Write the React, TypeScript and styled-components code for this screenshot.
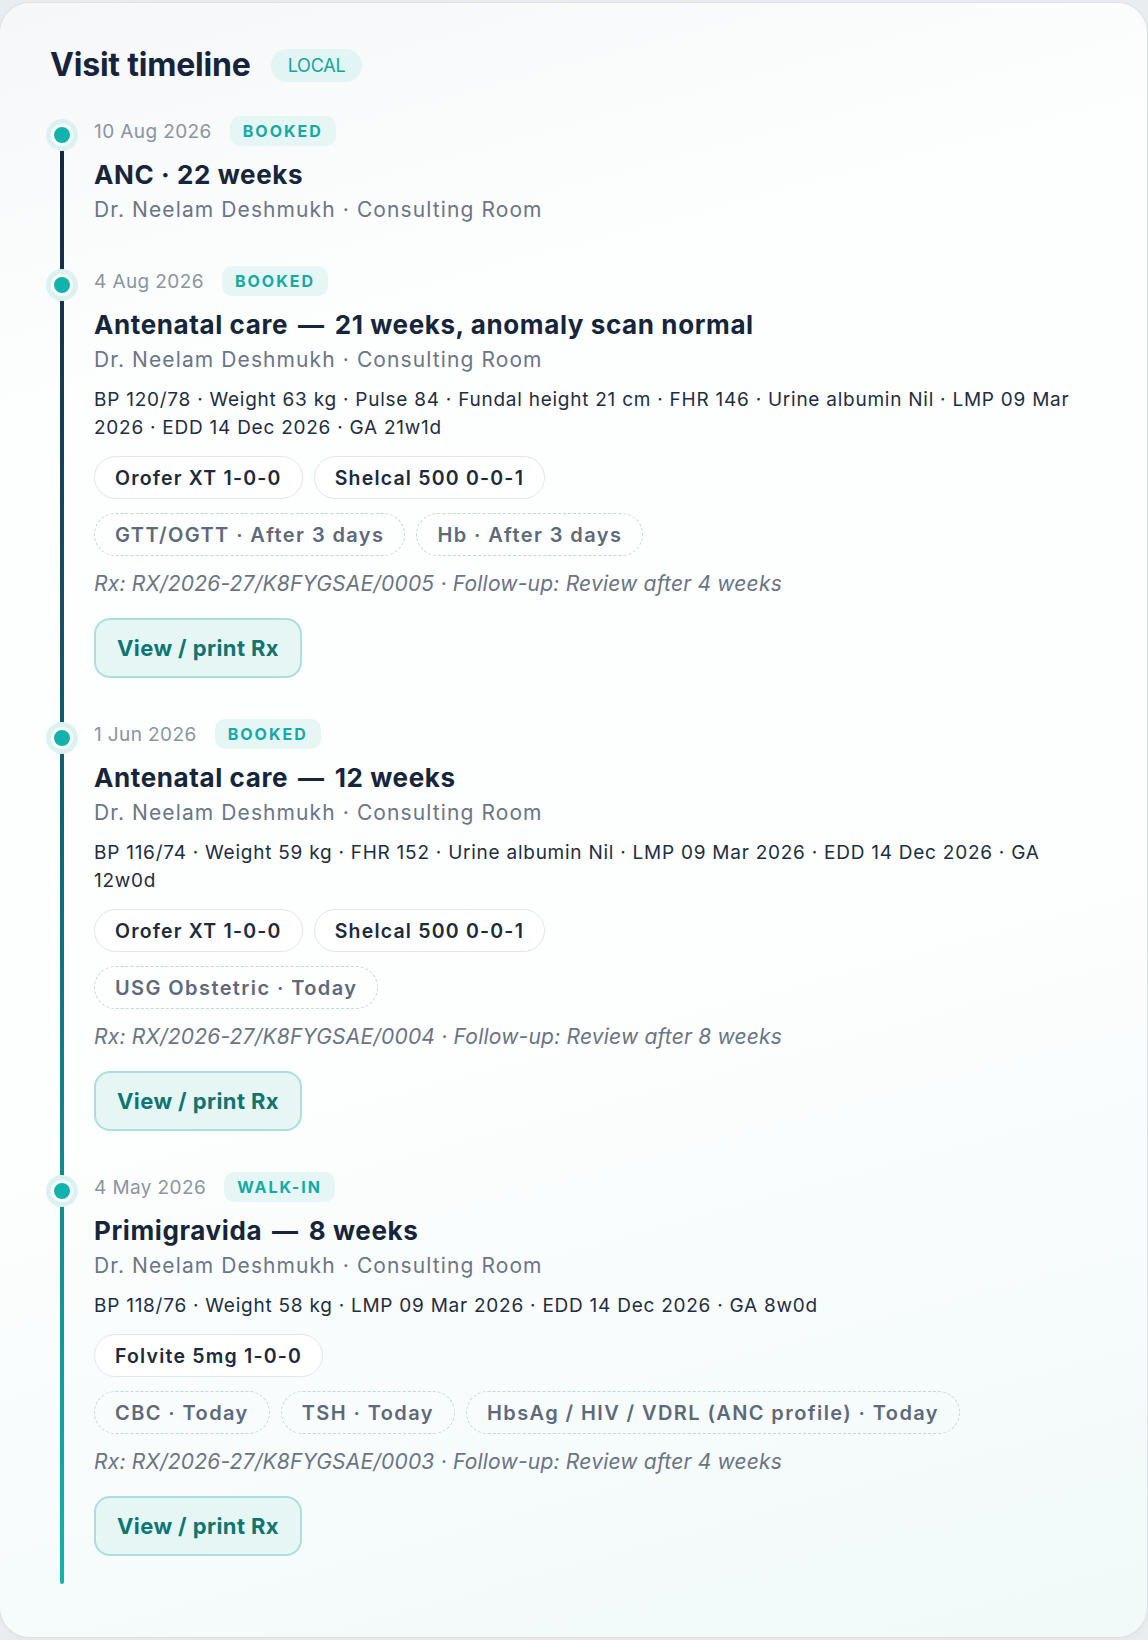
import React from 'react';
import styled, { createGlobalStyle } from 'styled-components';

const GlobalStyle = createGlobalStyle`
  body {
    margin: 0;
    background: #eaedef;
    font-family: Inter, "Noto Sans", sans-serif;
    -webkit-font-smoothing: antialiased;
  }
`;

type Visit = {
  date: string;
  kind: string;
  title: string[];
  vitals?: string;
  meds?: string[];
  labs?: string[];
  rx?: string;
};

// title parts are joined by an em dash
const visits: Visit[] = [
  {
    date: '10 Aug 2026',
    kind: 'BOOKED',
    title: ['ANC · 22 weeks']
  },
  {
    date: '4 Aug 2026',
    kind: 'BOOKED',
    title: ['Antenatal care', '21 weeks, anomaly scan normal'],
    vitals:
      'BP 120/78 · Weight 63 kg · Pulse 84 · Fundal height 21 cm · FHR 146 · Urine albumin Nil · LMP 09 Mar 2026 · EDD 14 Dec 2026 · GA 21w1d',
    meds: ['Orofer XT 1-0-0', 'Shelcal 500 0-0-1'],
    labs: ['GTT/OGTT · After 3 days', 'Hb · After 3 days'],
    rx: 'Rx: RX/2026-27/K8FYGSAE/0005 · Follow-up: Review after 4 weeks'
  },
  {
    date: '1 Jun 2026',
    kind: 'BOOKED',
    title: ['Antenatal care', '12 weeks'],
    vitals: 'BP 116/74 · Weight 59 kg · FHR 152 · Urine albumin Nil · LMP 09 Mar 2026 · EDD 14 Dec 2026 · GA 12w0d',
    meds: ['Orofer XT 1-0-0', 'Shelcal 500 0-0-1'],
    labs: ['USG Obstetric · Today'],
    rx: 'Rx: RX/2026-27/K8FYGSAE/0004 · Follow-up: Review after 8 weeks'
  },
  {
    date: '4 May 2026',
    kind: 'WALK-IN',
    title: ['Primigravida', '8 weeks'],
    vitals: 'BP 118/76 · Weight 58 kg · LMP 09 Mar 2026 · EDD 14 Dec 2026 · GA 8w0d',
    meds: ['Folvite 5mg 1-0-0'],
    labs: ['CBC · Today', 'TSH · Today', 'HbsAg / HIV / VDRL (ANC profile) · Today'],
    rx: 'Rx: RX/2026-27/K8FYGSAE/0003 · Follow-up: Review after 4 weeks'
  }
];

const Page = styled.div`
  padding: 3px 1px 3px 0;
`;

const Card = styled.section`
  border-radius: 30px;
  background: linear-gradient(165deg, #f6f7f8 0%, #fdfefe 22%, #fdfefe 60%, #f1f9f9 100%);
  box-shadow: 0 0 0 1px rgba(20, 40, 60, 0.04), 0 2px 8px rgba(20, 40, 60, 0.04);
  padding: 42px 62px 53px 50px;
`;

const Header = styled.div`
  display: flex;
  align-items: center;
  gap: 20px;
`;

const Title = styled.h2`
  margin: 0;
  font-size: 32px;
  line-height: 40px;
  font-weight: 700;
  letter-spacing: -0.2px;
  color: #15243a;
`;

const SourceTag = styled.span`
  display: inline-flex;
  align-items: center;
  height: 33px;
  padding: 0 17px;
  border-radius: 999px;
  background: #e2f4f3;
  color: #14a3a0;
  font-size: 18px;
  letter-spacing: -0.2px;
`;

const Timeline = styled.div`
  position: relative;
  margin-top: 31px;
  padding-bottom: 28px;
  display: flex;
  flex-direction: column;
  gap: 41px;
`;

const Rail = styled.div`
  position: absolute;
  left: 10px;
  top: 19px;
  bottom: 0;
  width: 4px;
  border-radius: 2px;
  background: linear-gradient(180deg, #13263e 0%, #155e74 45%, #12b3ae 100%);
`;

const Entry = styled.article`
  position: relative;
  padding-left: 44px;
  display: flex;
  flex-direction: column;
  align-items: flex-start;
`;

const Dot = styled.span`
  position: absolute;
  left: 1px;
  top: 8px;
  width: 16px;
  height: 16px;
  border-radius: 50%;
  background: #12b2ad;
  border: 3px solid #fbfefe;
  box-shadow: 0 0 0 5px #dcf2f1;
`;

const Meta = styled.div`
  display: flex;
  align-items: center;
  gap: 18px;
  height: 30px;
`;

const DateText = styled.span`
  font-size: 19px;
  color: #8b94a0;
  letter-spacing: 0.4px;
`;

const Kind = styled.span`
  display: inline-flex;
  align-items: center;
  height: 30px;
  padding: 0 13px;
  border-radius: 10px;
  background: #e6f6f5;
  color: #13aaa6;
  font-size: 16px;
  font-weight: 700;
  letter-spacing: 2px;
`;

const VisitTitle = styled.h3`
  margin: 13px 0 0;
  font-size: 26px;
  line-height: 32px;
  font-weight: 700;
  color: #16253a;
  letter-spacing: 0.6px;
`;

const Dash = styled.span`
  margin: 0 10px;
`;

const Doctor = styled.div`
  margin-top: 4px;
  font-size: 21px;
  line-height: 30px;
  color: #6b7585;
  letter-spacing: 1.1px;
`;

const Vitals = styled.p`
  margin: 11px 0 0;
  font-size: 19px;
  line-height: 28px;
  color: #1f2d40;
  letter-spacing: 0.75px;
`;

const ChipRow = styled.div`
  display: flex;
  flex-wrap: wrap;
  gap: 11px;
  margin-top: 14px;
`;

const Chip = styled.span<{ $dashed?: boolean }>`
  display: inline-flex;
  align-items: center;
  height: 43px;
  box-sizing: border-box;
  padding: 0 20px;
  border-radius: 999px;
  border: ${(p) => (p.$dashed ? '1.5px dashed #c6d6d9' : '1.5px solid #e0e6ea')};
  background: ${(p) => (p.$dashed ? 'transparent' : '#ffffff')};
  color: ${(p) => (p.$dashed ? '#5e6979' : '#1d2a3b')};
  font-size: ${(p) => (p.$dashed ? '20px' : '19.5px')};
  font-weight: 600;
  letter-spacing: ${(p) => (p.$dashed ? '1.4px' : '1.2px')};
`;

const RxLine = styled.p`
  margin: 14px 0 0;
  font-size: 21px;
  line-height: 28px;
  font-style: italic;
  color: #6b7483;
  letter-spacing: 0.2px;
`;

const PrintButton = styled.button`
  margin-top: 20px;
  height: 60px;
  padding: 0 21px;
  border-radius: 16px;
  border: 2px solid #abdfdd;
  background: #e5f6f5;
  color: #0f7571;
  font-family: inherit;
  font-size: 22px;
  font-weight: 700;
  letter-spacing: 0.4px;
  cursor: pointer;
`;

export default function App() {
  return (
    <Page>
      <GlobalStyle />
      <Card>
        <Header>
          <Title>Visit timeline</Title>
          <SourceTag>LOCAL</SourceTag>
        </Header>
        <Timeline>
          <Rail />
          {visits.map((v) => (
            <Entry key={v.date}>
              <Dot />
              <Meta>
                <DateText>{v.date}</DateText>
                <Kind>{v.kind}</Kind>
              </Meta>
              <VisitTitle>
                {v.title.map((part, i) => (
                  <React.Fragment key={part}>
                    {i > 0 && <Dash>—</Dash>}
                    {part}
                  </React.Fragment>
                ))}
              </VisitTitle>
              <Doctor>Dr. Neelam Deshmukh · Consulting Room</Doctor>
              {v.vitals && <Vitals>{v.vitals}</Vitals>}
              {v.meds && (
                <ChipRow>
                  {v.meds.map((m) => (
                    <Chip key={m}>{m}</Chip>
                  ))}
                </ChipRow>
              )}
              {v.labs && (
                <ChipRow>
                  {v.labs.map((l) => (
                    <Chip key={l} $dashed>
                      {l}
                    </Chip>
                  ))}
                </ChipRow>
              )}
              {v.rx && <RxLine>{v.rx}</RxLine>}
              {v.rx && <PrintButton>View / print Rx</PrintButton>}
            </Entry>
          ))}
        </Timeline>
      </Card>
    </Page>
  );
}
